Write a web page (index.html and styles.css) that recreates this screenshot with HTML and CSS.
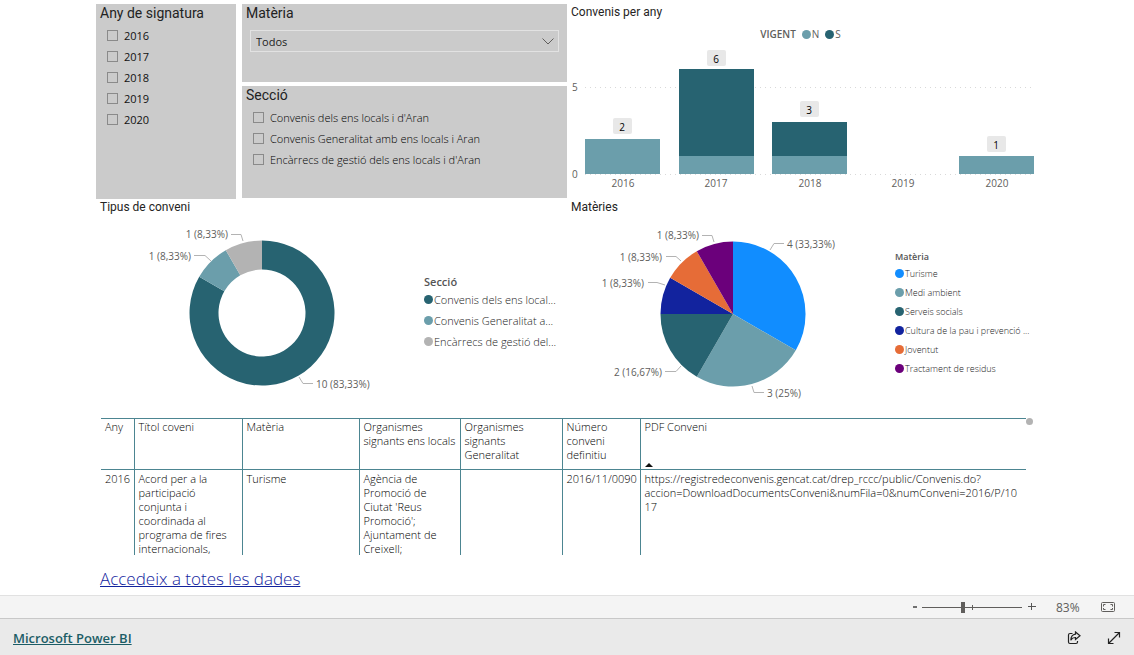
FILE: index.html
```html
<!DOCTYPE html>
<html lang="ca">
<head>
<meta charset="utf-8">
<meta name="viewport" content="width=device-width, initial-scale=1">
<title>Registre de convenis</title>
<link rel="stylesheet" href="styles.css">
</head>
<body>
<main class="report">
  <div class="grid">
    <div class="filters">
      <fieldset class="panel panel-years">
        <legend class="panel-title">Any de signatura</legend>
        <label class="check"><input type="checkbox">2016</label>
        <label class="check"><input type="checkbox">2017</label>
        <label class="check"><input type="checkbox">2018</label>
        <label class="check"><input type="checkbox">2019</label>
        <label class="check"><input type="checkbox">2020</label>
      </fieldset>
      <div class="filters-side">
        <div class="panel panel-topic">
          <label class="panel-title" for="topic">Matèria</label>
          <div class="select-wrap">
            <select id="topic" class="select"><option>Todos</option></select>
            <svg class="chevron" viewBox="0 0 12 7" width="12" height="7" aria-hidden="true"><path d="M.5.5 6 6 11.500.5" fill="none" stroke="#605e5c"/></svg>
          </div>
        </div>
        <fieldset class="panel panel-section">
          <legend class="panel-title">Secció</legend>
          <label class="check"><input type="checkbox">Convenis dels ens locals i d'Aran</label>
          <label class="check"><input type="checkbox">Convenis Generalitat amb ens locals i Aran</label>
          <label class="check"><input type="checkbox">Encàrrecs de gestió dels ens locals i d'Aran</label>
        </fieldset>
      </div>
    </div>

    <section class="visual">
      <h2 class="visual-title">Convenis per any</h2>
      <div class="bar-legend"><b>VIGENT</b><span class="key"><i class="dot c-light"></i>N</span><span class="key"><i class="dot c-dark"></i>S</span></div>
      <svg class="chart" viewBox="0 0 471 150" role="img" aria-label="Convenis per any">
        <g class="gridline"><path d="M18 45.500H467"/><path d="M18 132.500H467"/></g>
        <g class="axis"><text x="5" y="49">5</text><text x="5" y="136">0</text></g>
        <g class="f-light"><rect x="18" y="97" width="75" height="35"/><rect x="112" y="114" width="75" height="18"/><rect x="205" y="114" width="75" height="18"/><rect x="392" y="114" width="75" height="18"/></g>
        <g class="f-dark"><rect x="112" y="27" width="75" height="87"/><rect x="205" y="80" width="75" height="34"/></g>
        <g class="tag"><rect x="46" y="76" width="19" height="16" rx="2"/><rect x="140" y="8" width="19" height="16" rx="2"/><rect x="233" y="59" width="19" height="16" rx="2"/><rect x="420" y="94" width="19" height="16" rx="2"/></g>
        <g class="tag-text"><text x="55" y="89">2</text><text x="149" y="21">6</text><text x="242" y="72">3</text><text x="429" y="107">1</text></g>
        <g class="axis mid"><text x="56" y="145">2016</text><text x="149" y="145">2017</text><text x="243" y="145">2018</text><text x="336" y="145">2019</text><text x="430" y="145">2020</text></g>
      </svg>
    </section>

    <section class="visual">
      <h2 class="visual-title">Tipus de conveni</h2>
      <div class="pie-row">
        <svg class="chart donut" viewBox="0 0 328 196" role="img" aria-label="Tipus de conveni">
          <path class="f-dark" d="M166 25.500A72.500 72.500 0 1 1 103.200 61.800L128.300 76.300A43.500 43.500 0 1 0 166 54.500Z"/>
          <path class="f-light" d="M103.200 61.800A72.500 72.500 0 0 1 129.800 35.200L144.300 60.300A43.500 43.500 0 0 0 128.300 76.300Z"/>
          <path class="f-grey" d="M129.800 35.200A72.500 72.500 0 0 1 166 25.500V54.500A43.500 43.500 0 0 0 144.300 60.300Z"/>
          <g class="leader"><path d="M135 19.500H145L147 26"/><path d="M98 40.500H109L115 46"/><path d="M203 162 207 168.500H217"/></g>
          <g class="value"><text class="end" x="132" y="23">1 (8,33%)</text><text class="end" x="95" y="45">1 (8,33%)</text><text x="220" y="173">10 (83,33%)</text></g>
        </svg>
        <div class="legend legend-large">
          <b>Secció</b>
          <span class="key"><i class="dot c-dark"></i>Convenis dels ens local...</span>
          <span class="key"><i class="dot c-light"></i>Convenis Generalitat a...</span>
          <span class="key"><i class="dot c-grey"></i>Encàrrecs de gestió del...</span>
        </div>
      </div>
    </section>

    <section class="visual">
      <h2 class="visual-title">Matèries</h2>
      <div class="pie-row">
        <svg class="chart pie" viewBox="0 0 328 196" role="img" aria-label="Matèries">
          <path fill="#118dff" d="M166 99V26.500A72.500 72.500 0 0 1 228.800 135.300Z"/>
          <path class="f-light" d="M166 99 228.800 135.300A72.500 72.500 0 0 1 129.800 161.800Z"/>
          <path class="f-dark" d="M166 99 129.800 161.800A72.500 72.500 0 0 1 93.500 99Z"/>
          <path fill="#12239e" d="M166 99H93.500A72.500 72.500 0 0 1 103.200 62.800Z"/>
          <path fill="#e66c37" d="M166 99 103.200 62.800A72.500 72.500 0 0 1 129.800 36.200Z"/>
          <path fill="#6b007b" d="M166 99 129.800 36.200A72.500 72.500 0 0 1 166 26.500Z"/>
          <g class="leader"><path d="M203 35 207 28.500H217"/><path d="M185 171 187 177.500H197"/><path d="M98 156.500H109L114 151"/><path d="M81 67.500H90L98 70"/><path d="M99 41.500H109L114 46"/><path d="M135 20.500H145L147 27"/></g>
          <g class="value"><text x="220" y="33">4 (33,33%)</text><text x="200" y="182">3 (25%)</text><text class="end" x="95" y="161">2 (16,67%)</text><text class="end" x="77" y="72">1 (8,33%)</text><text class="end" x="95" y="46">1 (8,33%)</text><text class="end" x="132" y="24">1 (8,33%)</text></g>
        </svg>
        <div class="legend legend-small">
          <b>Matèria</b>
          <span class="key"><i class="dot c-blue"></i>Turisme</span>
          <span class="key"><i class="dot c-light"></i>Medi ambient</span>
          <span class="key"><i class="dot c-dark"></i>Serveis socials</span>
          <span class="key"><i class="dot c-navy"></i>Cultura de la pau i prevenció ...</span>
          <span class="key"><i class="dot c-orange"></i>Joventut</span>
          <span class="key"><i class="dot c-purple"></i>Tractament de residus</span>
        </div>
      </div>
    </section>
  </div>

  <div class="table-row">
    <div class="table-clip">
      <table class="data">
        <colgroup><col class="w-any"><col class="w-title"><col class="w-topic"><col class="w-org"><col class="w-gen"><col class="w-num"><col></colgroup>
        <thead>
          <tr><th>Any</th><th>Títol coveni</th><th>Matèria</th><th>Organismes signants ens locals</th><th>Organismes signants Generalitat</th><th>Número conveni definitiu</th><th class="sorted">PDF Conveni<svg class="sort" viewBox="0 0 8 4" width="8" height="4" aria-hidden="true"><path d="M0 4 4 0 8 4Z" fill="#111"/></svg></th></tr>
        </thead>
        <tbody>
          <tr><td class="num">2016</td><td>Acord per a la participació conjunta i coordinada al programa de fires internacionals,</td><td>Turisme</td><td class="org">Agència de Promoció de Ciutat 'Reus Promoció'; Ajuntament de Creixell;</td><td></td><td class="code">2016/11/0090</td><td>https://registredeconvenis.gencat.cat/drep_rccc/public/Convenis.do?<wbr>accion=DownloadDocumentsConveni&amp;numFila=0&amp;numConveni=2016/P/10<wbr>17</td></tr>
        </tbody>
      </table>
    </div>
    <span class="scroll-dot"></span>
  </div>
  <a class="all-data" href="#">Accedeix a totes les dades</a>
</main>

<div class="zoombar">
  <button class="icon-btn" type="button" aria-label="Redueix"><svg viewBox="0 0 10 10" width="10" height="10"><path d="M3 5H7" stroke="#444" stroke-width="1.500"/></svg></button>
  <input class="zoom" type="range" min="0" max="100" value="41" aria-label="Zoom">
  <button class="icon-btn" type="button" aria-label="Amplia"><svg viewBox="0 0 10 10" width="10" height="10"><path d="M1 4.500H9M4.500 1V8" stroke="#555" fill="none"/></svg></button>
  <span class="percent">83%</span>
  <button class="icon-btn fit" type="button" aria-label="Ajusta a la pàgina"><svg viewBox="0 0 14 11" width="14" height="11"><rect x=".5" y=".5" width="13" height="9" rx="1" fill="none" stroke="#605e5c"/><path d="M2.500 4.500V2.500H4.500M9.500 2.500H11.500V4.500M11.500 6V7.500H9.500M4.500 7.500H2.500V6" fill="none" stroke="#605e5c"/></svg></button>
</div>
<footer class="footer">
  <a class="brand" href="#">Microsoft Power BI</a>
  <button class="icon-btn" type="button" aria-label="Comparteix"><svg viewBox="0 0 14 14" width="14" height="14" fill="none" stroke="#222" stroke-width="1.200"><path d="M5.500 2.500H3Q1.500 2.500 1.500 4V11Q1.500 12.500 3 12.500H9Q10.500 12.500 10.500 11V10"/><path d="M8.500 1 13 4.800 8.500 8.500V6.500Q5.500 6.300 3.800 9.200 4 3.800 8.500 3.200Z"/></svg></button>
  <button class="icon-btn" type="button" aria-label="Pantalla completa"><svg viewBox="0 0 14 14" width="14" height="14" fill="none" stroke="#222" stroke-width="1.200"><path d="M1.500 12.500 12.500 1.500M7.500 1.500H12.500V6.500M1.500 7.500V12.500H6.500"/></svg></button>
</footer>
</body>
</html>
```

FILE: styles.css
```css
* { box-sizing: border-box; }
body {
  margin: 0;
  min-height: 100vh;
  display: flex;
  flex-direction: column;
  background: #fff;
  color: #000;
  font-family: "Open Sans", "Noto Sans", sans-serif;
  font-size: 11px;
  font-weight: 300;
}
b { font-weight: 600; }
button { border: 0; background: none; padding: 0; font: inherit; }

.report { flex: 1; width: 100%; max-width: 942px; margin: 0 auto; padding-top: 4px; }
.grid { display: grid; grid-template-columns: 1fr 1fr; }
.filters { display: grid; grid-template-columns: 140fr 325fr; gap: 6px; min-height: 195px; }
.filters-side { display: grid; grid-template-rows: 78px 1fr; gap: 4px; padding-bottom: 1px; }
.panel { min-width: 0; margin: 0; border: 0; padding: 0 8px; background: #cbcbcb; }
.panel-title {
  display: block;
  float: left;
  width: 100%;
  margin-left: -4px;
  padding: 0;
  line-height: 18px;
  color: #222;
  font-family: Roboto, sans-serif;
  font-size: 14px;
  font-weight: 400;
}
fieldset .panel-title { margin-bottom: 3px; }
.check { display: flex; align-items: center; clear: both; gap: 6px; height: 21px; padding-left: 3px; }
.panel-years .check { color: #111; font-weight: 400; }
.check input { appearance: none; width: 11px; height: 11px; margin: 0; border: 1px solid #8a8a8a; }
.select-wrap { position: relative; display: flex; clear: both; padding-top: 8px; }
.select {
  appearance: none;
  width: 100%;
  height: 22px;
  border: 1px solid #e2e2e2;
  border-radius: 0;
  background: transparent;
  padding: 0 5px;
  color: #222;
  font: inherit;
  font-weight: 400;
}
.chevron { position: absolute; right: 5px; bottom: 7px; pointer-events: none; }

.visual { min-width: 0; }
.visual-title { margin: 0; padding-left: 4px; font: 400 12px/16px Roboto, sans-serif; color: #252423; }
.chart { display: block; width: 100%; height: auto; overflow: visible; }
.bar-legend {
  display: flex;
  justify-content: center;
  align-items: center;
  gap: 6px;
  height: 22px;
  padding: 6px 4px 0 0;
  color: #605e5c;
  font-size: 10px;
  font-weight: 400;
}
.key { display: flex; align-items: center; gap: 1px; white-space: nowrap; }
.dot { flex: none; width: 9px; height: 9px; border-radius: 50%; }
.c-light { background: #6b9eab; }
.c-dark { background: #276371; }
.c-grey { background: #b3b3b3; }
.c-blue { background: #118dff; }
.c-navy { background: #12239e; }
.c-orange { background: #e66c37; }
.c-purple { background: #6b007b; }
.f-light { fill: #6b9eab; }
.f-dark { fill: #276371; }
.f-grey { fill: #b3b3b3; }
.gridline { stroke: #d9d9d9; stroke-dasharray: 1 4; }
.axis, .value { fill: #605e5c; font-size: 10px; font-weight: 400; }
.mid, .tag-text { text-anchor: middle; }
.tag { fill: #e8e8e8; }
.tag-text { fill: #000; font-size: 10px; font-weight: 400; }
.leader { fill: none; stroke: #b3b3b3; }
.end { text-anchor: end; }
.pie-row { display: grid; grid-template-columns: 328fr 143fr; align-items: start; }
.legend { display: flex; flex-direction: column; color: #222; }
.legend b { color: #555; }
.legend-large { padding-top: 60px; font-size: 11px; line-height: 21px; }
.legend-large b { line-height: 14px; }
.legend-small { padding-top: 35px; font-size: 9px; line-height: 19px; }
.legend-small b { line-height: 14px; }

.table-row { display: flex; align-items: flex-start; padding: 7px 5px 0; }
.table-clip { flex: 1; height: 137px; overflow: hidden; }
.data { width: 100%; table-layout: fixed; border-collapse: collapse; line-height: 14px; }
.data th, .data td { padding: 2px 0 4px 4px; text-align: left; vertical-align: top; font-weight: 300; border-left: 1px solid #4c8591; }
.data th:first-child, .data td:first-child { border-left: 0; }
.data th { height: 51px; padding-top: 1px; border-top: 1px solid #4c8591; border-bottom: 1px solid #4c8591; }
.data td { height: 90px; }
.data .num { padding-right: 4px; text-align: right; }
.data .org { padding-right: 8px; }
.data .code { white-space: nowrap; }
.w-any { width: 33px; }
.w-title { width: 108px; }
.w-topic { width: 117px; }
.w-org { width: 101px; }
.w-gen { width: 102px; }
.w-num { width: 78px; }
.sorted { position: relative; }
.sort { position: absolute; left: 4px; bottom: 2px; }
.scroll-dot { width: 7px; height: 7px; border-radius: 50%; background: #b3b3b3; }
.all-data { display: inline-block; margin: 10px 4px 0; color: #12239e; font-size: 17px; line-height: 28px; }

.zoombar {
  display: flex;
  align-items: center;
  justify-content: flex-end;
  height: 23px;
  padding-right: 19px;
  border-top: 1px solid #e1e1e1;
  background: #f4f4f4;
  color: #605e5c;
}
.zoom {
  appearance: none;
  width: 100px;
  height: 13px;
  margin: 0 5px 0 2px;
  background:
    linear-gradient(#605e5c, #605e5c) 50px 50% / 1px 5px no-repeat,
    linear-gradient(#605e5c, #605e5c) 0 50% / 100% 1px no-repeat;
}
.zoom::-webkit-slider-thumb { appearance: none; width: 4px; height: 11px; background: #605e5c; }
.icon-btn { display: inline-flex; }
.percent { width: 42px; margin-left: 19px; font-size: 12px; font-weight: 400; }
.fit { margin-left: 3px; }
.footer {
  display: flex;
  align-items: center;
  gap: 26px;
  height: 37px;
  padding: 2px 13px 0;
  border-top: 1px solid #c8c8c8;
  background: #eaeaea;
}
.brand { margin-right: auto; color: #1c5d66; font-size: 13px; font-weight: 600; }
```
